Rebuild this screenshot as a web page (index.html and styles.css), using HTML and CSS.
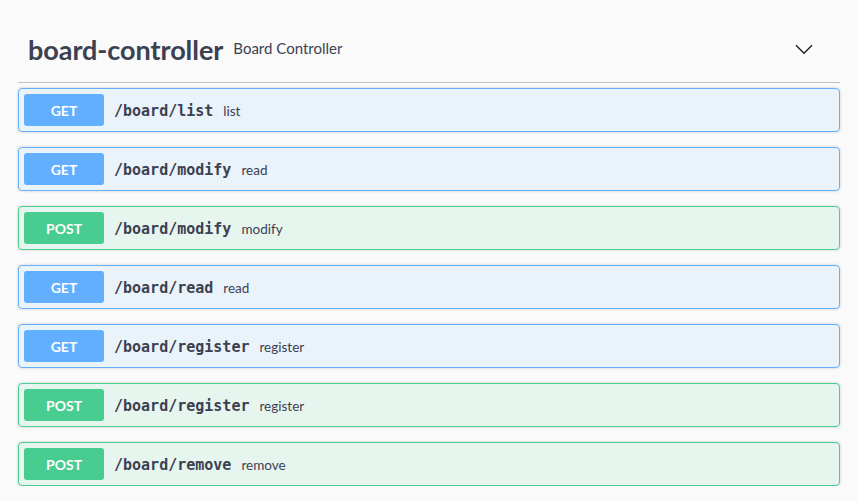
FILE: index.html
```html
<!DOCTYPE html>
<html>
<head>
<meta charset="utf-8">
<link rel="stylesheet" href="styles.css">
</head>
<body>
<div class="section">
  <h3 class="tag">
    <span class="tag-name">board-controller</span>
    <small class="tag-desc">Board Controller</small>
    <span class="spacer"></span>
    <button class="expand" aria-label="collapse">
      <svg width="18" height="11" viewBox="0 0 18 11"><polyline points="1,1.2 9,9.2 17,1.2" fill="none" stroke="#222" stroke-width="1.4"/></svg>
    </button>
  </h3>
  <div class="ops">
    <div class="op get"><span class="method">GET</span><span class="path">/board/list</span><span class="desc">list</span></div>
    <div class="op get"><span class="method">GET</span><span class="path">/board/modify</span><span class="desc">read</span></div>
    <div class="op post"><span class="method">POST</span><span class="path">/board/modify</span><span class="desc">modify</span></div>
    <div class="op get"><span class="method">GET</span><span class="path">/board/read</span><span class="desc">read</span></div>
    <div class="op get"><span class="method">GET</span><span class="path">/board/register</span><span class="desc">register</span></div>
    <div class="op post"><span class="method">POST</span><span class="path">/board/register</span><span class="desc">register</span></div>
    <div class="op post"><span class="method">POST</span><span class="path">/board/remove</span><span class="desc">remove</span></div>
  </div>
</div>
</body>
</html>
```
FILE: styles.css
```css
html, body {
  margin: 0;
  padding: 0;
  background: #fafafa;
}
body {
  font-family: "Lato", "Open Sans", sans-serif;
  color: #3b4151;
  padding: 14px 18px 0;
}
.tag {
  display: flex;
  align-items: center;
  margin: 0 0 5px;
  padding: 10px 27px 10px 10px;
  height: 48px;
  border-bottom: 1px solid rgba(59, 65, 81, 0.3);
  font-weight: normal;
}
.tag-name {
  font-size: 27px;
  font-weight: 700;
  color: #3b4151;
  margin-top: 2px;
  letter-spacing: -0.05px;
}
.tag-desc {
  font-size: 15px;
  padding: 0 10px;
  color: #3b4151;
}
.spacer { flex: 1; }
.expand {
  border: none;
  background: none;
  padding: 0;
  width: 18px;
  height: 11px;
  display: flex;
  margin-top: 2px;
}
.ops {
  display: flex;
  flex-direction: column;
  gap: 15px;
}
.op {
  display: flex;
  align-items: center;
  padding: 5px;
  border: 1px solid;
  border-radius: 4px;
  box-shadow: 0 0 3px rgba(0, 0, 0, 0.19);
}
.op.get {
  background: rgba(97, 175, 254, 0.1);
  border-color: #61affe;
}
.op.post {
  background: rgba(73, 204, 144, 0.1);
  border-color: #49cc90;
}
.method {
  width: 80px;
  height: 32px;
  display: flex;
  align-items: center;
  justify-content: center;
  border-radius: 3px;
  color: #fff;
  font-size: 14px;
  font-weight: 700;
}
.get .method { background: #61affe; }
.post .method { background: #49cc90; }
.path {
  padding: 1px 10px 0;
  font-family: "DejaVu Sans Mono", monospace;
  font-weight: 700;
  font-size: 15px;
  color: #3b4151;
}
.desc {
  padding-top: 1px;
  font-size: 13.5px;
  color: #3b4151;
}
```
